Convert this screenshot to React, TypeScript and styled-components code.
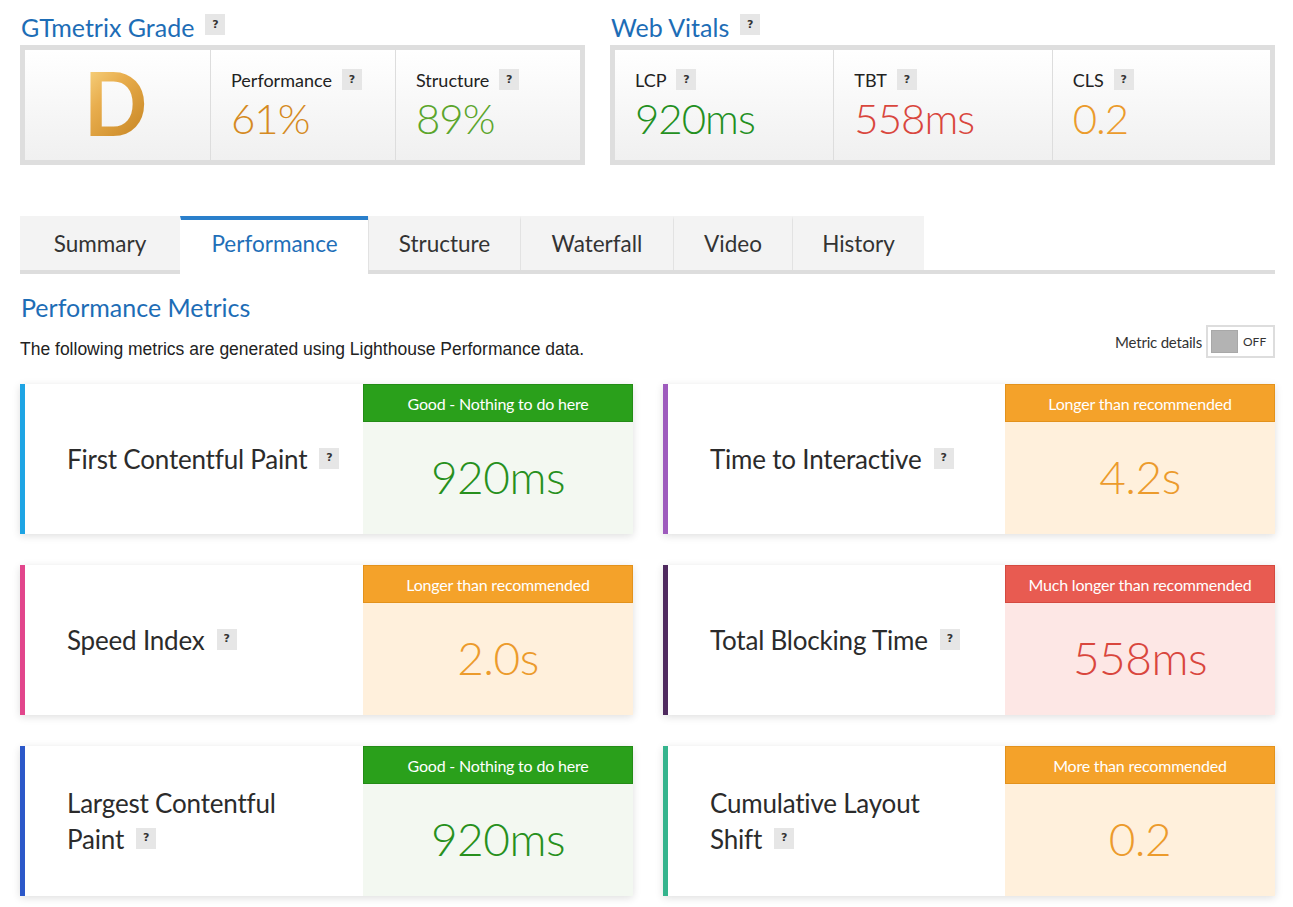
import React from "react";
import styled, { createGlobalStyle } from "styled-components";

const GlobalStyle = createGlobalStyle`
  body {
    margin: 0;
    background: #ffffff;
    font-family: "Lato", "Noto Sans", sans-serif;
    color: #333333;
  }
`;

type Tone = "good" | "warn" | "bad";

const toneColors: Record<Tone, { head: string; edge: string; body: string; text: string }> = {
  good: { head: "#2aa01b", edge: "#238c16", body: "#f3f8f1", text: "#27901d" },
  warn: { head: "#f4a22a", edge: "#e3921c", body: "#fff0dc", text: "#ec9b2c" },
  bad: { head: "#e85b51", edge: "#d44a40", body: "#fde7e5", text: "#d9463d" },
};

type MetricType = {
  label: string;
  value: string;
  status: string;
  tone: Tone;
  accent: string;
};

const metrics: MetricType[] = [
  { label: "First Contentful Paint", value: "920ms", status: "Good - Nothing to do here", tone: "good", accent: "#1ea4e4" },
  { label: "Time to Interactive", value: "4.2s", status: "Longer than recommended", tone: "warn", accent: "#9e5bbd" },
  { label: "Speed Index", value: "2.0s", status: "Longer than recommended", tone: "warn", accent: "#e2468c" },
  { label: "Total Blocking Time", value: "558ms", status: "Much longer than recommended", tone: "bad", accent: "#4f2a5f" },
  { label: "Largest Contentful Paint", value: "920ms", status: "Good - Nothing to do here", tone: "good", accent: "#2c58c9" },
  { label: "Cumulative Layout Shift", value: "0.2", status: "More than recommended", tone: "warn", accent: "#35b48d" },
];

const tabs = [
  { name: "Summary", width: 160 },
  { name: "Performance", width: 188 },
  { name: "Structure", width: 152 },
  { name: "Waterfall", width: 153 },
  { name: "Video", width: 119 },
  { name: "History", width: 132 },
];

const Help = () => <HelpBadge>?</HelpBadge>;

const MetricCard = (props: MetricType) => {
  const words = props.label.split(" ");
  const last = words.pop();
  return (
    <Card $accent={props.accent}>
      <CardLabel>
        <LabelText>
          {words.join(" ")} <NoWrap>{last}<Help /></NoWrap>
        </LabelText>
      </CardLabel>
      <CardStatus $tone={props.tone}>
        <StatusHead $tone={props.tone}>{props.status}</StatusHead>
        <StatusValue $tone={props.tone}>{props.value}</StatusValue>
      </CardStatus>
    </Card>
  );
};

export default function App() {
  return (
    <>
      <GlobalStyle />
      <Page>
        <TopRow>
          <Panel>
            <PanelTitle>
              GTmetrix Grade <Help />
            </PanelTitle>
            <ScoreBox>
              <GradeCell>
                <GradeLetter>D</GradeLetter>
              </GradeCell>
              <ScoreCell>
                <ScoreLabel>
                  Performance <Help />
                </ScoreLabel>
                <ScoreValue $color="#d58a22">61%</ScoreValue>
              </ScoreCell>
              <ScoreCell>
                <ScoreLabel>
                  Structure <Help />
                </ScoreLabel>
                <ScoreValue $color="#5ba52b">89%</ScoreValue>
              </ScoreCell>
            </ScoreBox>
          </Panel>

          <Panel>
            <PanelTitle>
              Web Vitals <Help />
            </PanelTitle>
            <ScoreBox>
              <ScoreCell>
                <ScoreLabel>
                  LCP <Help />
                </ScoreLabel>
                <ScoreValue $color="#24901f">920ms</ScoreValue>
              </ScoreCell>
              <ScoreCell>
                <ScoreLabel>
                  TBT <Help />
                </ScoreLabel>
                <ScoreValue $color="#d9463d">558ms</ScoreValue>
              </ScoreCell>
              <ScoreCell>
                <ScoreLabel>
                  CLS <Help />
                </ScoreLabel>
                <ScoreValue $color="#eb9b2c">0.2</ScoreValue>
              </ScoreCell>
            </ScoreBox>
          </Panel>
        </TopRow>

        <TabBar>
          {tabs.map((t) => (
            <Tab key={t.name} $width={t.width} $active={t.name === "Performance"}>
              {t.name}
            </Tab>
          ))}
        </TabBar>

        <SectionTitle>Performance Metrics</SectionTitle>
        <IntroRow>
          <Intro>The following metrics are generated using Lighthouse Performance data.</Intro>
          <ToggleWrap>
            <ToggleLabel>Metric details</ToggleLabel>
            <Toggle>
              <ToggleKnob />
              <ToggleText>OFF</ToggleText>
            </Toggle>
          </ToggleWrap>
        </IntroRow>

        <MetricGrid>
          {metrics.map((m) => (
            <MetricCard key={m.label} {...m} />
          ))}
        </MetricGrid>
      </Page>
    </>
  );
}

const Page = styled.div`
  width: 1255px;
  margin-left: 20px;
  padding-top: 11px;
  padding-bottom: 10px;
`;

const TopRow = styled.div`
  display: grid;
  grid-template-columns: 565px 665px;
  column-gap: 25px;
`;

const Panel = styled.section`
  display: flex;
  flex-direction: column;
`;

const PanelTitle = styled.h2`
  margin: 0 0 0 1px;
  height: 34px;
  display: flex;
  align-items: center;
  gap: 11px;
  padding-bottom: 2px;
  box-sizing: border-box;
  font-size: 25px;
  font-weight: 400;
  color: #1d6db6;
`;

const HelpBadge = styled.span`
  display: inline-flex;
  align-items: center;
  justify-content: center;
  width: 20px;
  height: 21px;
  margin-left: 12px;
  background: #e6e6e6;
  color: #333333;
  font-family: "DejaVu Sans", sans-serif;
  font-size: 11px;
  font-weight: 700;
  vertical-align: middle;
  position: relative;
  top: -3px;

  ${PanelTitle} & {
    margin-left: 0;
    top: -3px;
  }
`;

const ScoreBox = styled.div`
  display: grid;
  grid-template-columns: 1fr 1fr 1fr;
  height: 120px;
  box-sizing: border-box;
  border: 5px solid #dedede;
  background: linear-gradient(#ffffff, #f0f0f0);
`;

const ScoreCell = styled.div`
  padding: 18px 20px 0;
  border-left: 1px solid #dddddd;

  &:first-child {
    border-left: none;
  }
`;

const GradeCell = styled.div`
  display: flex;
  align-items: center;
  justify-content: center;
`;

const GradeLetter = styled.span`
  font-size: 88px;
  font-weight: 700;
  line-height: 1;
  margin-top: -6px;
  margin-right: 4px;
  transform: scaleX(0.95);
  background: linear-gradient(135deg, #fbdc8c 0%, #e8ad4d 40%, #c27f1c 100%);
  -webkit-background-clip: text;
  background-clip: text;
  color: transparent;
`;

const ScoreLabel = styled.div`
  display: flex;
  align-items: center;
  height: 24px;
  font-size: 18px;
  color: #222222;

  ${HelpBadge} {
    margin-left: 10px;
    top: -1px;
  }
`;

const ScoreValue = styled.div<{ $color: string }>`
  margin-top: 2px;
  font-size: 42px;
  font-weight: 300;
  line-height: 48px;
  letter-spacing: -1px;
  color: ${(p) => p.$color};
`;

const TabBar = styled.nav`
  display: flex;
  margin-top: 51px;
  border-bottom: 4px solid #dddddd;
`;

const Tab = styled.div<{ $active?: boolean; $width: number }>`
  display: flex;
  align-items: center;
  justify-content: center;
  width: ${(p) => p.$width}px;
  box-sizing: border-box;
  font-size: 22.5px;
  color: ${(p) => (p.$active ? "#1f6fb8" : "#333333")};
  background: ${(p) => (p.$active ? "#ffffff" : "#f3f3f3")};
  border-top: 4px solid ${(p) => (p.$active ? "#2a7fcb" : "#f3f3f3")};
  border-left: 1px solid ${(p) => (p.$active ? "#ffffff" : "#e2e2e2")};
  margin-bottom: ${(p) => (p.$active ? "-4px" : "0")};
  height: ${(p) => (p.$active ? "58px" : "54px")};
  padding-bottom: ${(p) => (p.$active ? "8px" : "4px")};

  &:first-child {
    border-left: none;
  }
`;

const SectionTitle = styled.h2`
  margin: 17px 0 0 1px;
  font-size: 25px;
  line-height: 32px;
  font-weight: 400;
  color: #1d6db6;
`;

const IntroRow = styled.div`
  display: flex;
  justify-content: space-between;
  align-items: flex-end;
  margin-top: 2px;
`;

const Intro = styled.p`
  margin: 0;
  font-family: "Liberation Sans", Arial, sans-serif;
  font-size: 17.5px;
  line-height: 20px;
  color: #222222;
  padding-bottom: 0;
`;

const ToggleWrap = styled.div`
  display: flex;
  align-items: center;
  gap: 4px;
  margin-bottom: 1px;
`;

const ToggleLabel = styled.span`
  font-size: 15px;
  color: #333333;
  letter-spacing: -0.2px;
`;

const Toggle = styled.div`
  display: flex;
  align-items: center;
  width: 69px;
  height: 33px;
  box-sizing: border-box;
  border: 2px solid #dddddd;
  padding: 3px;
  background: #ffffff;
`;

const ToggleKnob = styled.div`
  width: 27px;
  height: 23px;
  background: #b3b3b3;
  border: 1px solid #a8a8a8;
  box-sizing: border-box;
`;

const ToggleText = styled.span`
  margin-left: 5px;
  font-size: 12px;
  color: #333333;
`;

const MetricGrid = styled.div`
  display: grid;
  grid-template-columns: 613px 612px;
  column-gap: 30px;
  row-gap: 31px;
  margin-top: 25px;
`;

const Card = styled.div<{ $accent: string }>`
  display: grid;
  grid-template-columns: 1fr 270px;
  height: 150px;
  background: #ffffff;
  border-left: 5px solid ${(p) => p.$accent};
  box-shadow: 0 2px 8px rgba(0, 0, 0, 0.13);
`;

const CardLabel = styled.div`
  display: flex;
  align-items: center;
  padding: 0 0 0 42px;
`;

const LabelText = styled.div`
  font-size: 26px;
  line-height: 36px;
  letter-spacing: -0.2px;
  color: #2b2b2b;
  max-width: 292px;

  ${HelpBadge} {
    top: -4px;
  }
`;

const NoWrap = styled.span`
  white-space: nowrap;
`;

const CardStatus = styled.div<{ $tone: Tone }>`
  display: flex;
  flex-direction: column;
  background: ${(p) => toneColors[p.$tone].body};
`;

const StatusHead = styled.div<{ $tone: Tone }>`
  height: 38px;
  box-sizing: border-box;
  display: flex;
  align-items: center;
  justify-content: center;
  background: ${(p) => toneColors[p.$tone].head};
  border: 1px solid ${(p) => toneColors[p.$tone].edge};
  color: #ffffff;
  font-size: 16px;
  letter-spacing: -0.2px;
`;

const StatusValue = styled.div<{ $tone: Tone }>`
  flex: 1;
  display: flex;
  align-items: center;
  justify-content: center;
  padding-bottom: 4px;
  font-size: 46px;
  font-weight: 300;
  letter-spacing: -0.5px;
  color: ${(p) => toneColors[p.$tone].text};
`;
